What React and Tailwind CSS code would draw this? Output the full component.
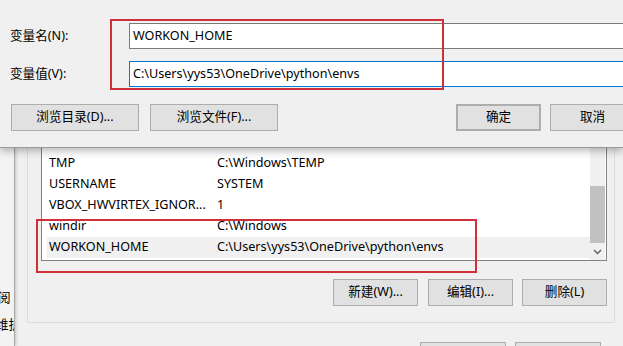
import React from "react";

const rows = [
  { name: "TEMP", value: "C:\\Windows\\TEMP" },
  { name: "TMP", value: "C:\\Windows\\TEMP" },
  { name: "USERNAME", value: "SYSTEM" },
  { name: "VBOX_HWVIRTEX_IGNOR...", value: "1" },
  { name: "windir", value: "C:\\Windows" },
  { name: "WORKON_HOME", value: "C:\\Users\\yys53\\OneDrive\\python\\envs", selected: true },
];

const Btn = ({ children, className = "" }) => (
  <div
    className={`h-[27px] shrink-0 flex items-center justify-center bg-[#e1e1e1] border border-[#adadad] ${className}`}
  >
    {children}
  </div>
);

const App = () => {
  return (
    <div
      className="relative w-[623px] h-[346px] overflow-hidden bg-[#f0f0f0] text-[12.6px] text-black"
      style={{ fontFamily: '"Noto Sans", "Noto Sans CJK SC", sans-serif' }}
    >
      {/* edit variable dialog on top */}
      <div className="relative z-10 h-[148px] bg-[#f0f0f0] border-b border-[#9a9a9a] shadow-[0_3px_8px_rgba(0,0,0,0.28)] pt-[23px] pl-[10px]">
        <div className="flex items-center h-[26px]">
          <div className="w-[119px] shrink-0">变量名(N):</div>
          <div className="w-[520px] shrink-0 h-[26px] bg-white border border-[#7a7a7a] flex items-center pl-[3px]">
            WORKON_HOME
          </div>
        </div>
        <div className="flex items-center h-[26px] mt-[12px]">
          <div className="w-[119px] shrink-0">变量值(V):</div>
          <div className="w-[520px] shrink-0 h-[26px] bg-white border border-[#0078d7] flex items-center pl-[3px]">
            C:\Users\yys53\OneDrive\python\envs
          </div>
        </div>
        <div className="flex mt-[17px] pl-[1px]">
          <Btn className="w-[128px]">浏览目录(D)...</Btn>
          <Btn className="w-[128px] ml-[11px]">浏览文件(F)...</Btn>
          <Btn className="w-[85px] ml-[178px] border-2 border-[#0078d7]">确定</Btn>
          <Btn className="w-[85px] ml-[9px]">取消</Btn>
        </div>

        <div className="absolute left-[110px] top-[19px] w-[334px] h-[71px] border-2 border-[#cf2f38]" />
      </div>

      {/* environment variables dialog underneath */}
      <div className="flex h-[198px]">
        <div className="w-[15px] shrink-0 border-r border-[#a8a8a8] bg-[#f3f3f3] shadow-[1px_0_3px_rgba(0,0,0,0.2)] overflow-hidden whitespace-nowrap">
          <div className="mt-[141px] -ml-[2px]">阅</div>
          <div className="mt-[8px] -ml-[4px]">维护</div>
        </div>
        <div className="relative flex-1 pl-[12px]">
          <div className="w-[588px] h-[191px] -mt-[16px] border-l border-b border-r border-[#dcdcdc] pl-[13px] pr-[7px]">
            <div className="flex h-[129px] bg-white border-l border-b border-r border-[#828282] pr-[1px]">
              <div className="flex-1 pl-[5px]">
                {rows.map((r, i) => (
                  <div
                    key={i}
                    className={`flex items-center h-[21px] pl-[2px] ${r.selected ? "bg-[#f0f0f0]" : ""}`}
                  >
                    <div className="w-[168px] shrink-0 whitespace-nowrap">{r.name}</div>
                    <div className="whitespace-nowrap">{r.value}</div>
                  </div>
                ))}
              </div>
              <div className="w-[15px] shrink-0 bg-[#f0f0f0] flex flex-col">
                <div className="h-[54px]" />
                <div className="h-[57px] bg-[#c1c1c1]" />
                <div className="flex-1 flex items-center justify-center">
                  <svg width="9" height="6" viewBox="0 0 9 6">
                    <path d="M1 1 L4.5 4.5 L8 1" stroke="#606060" strokeWidth="1.5" fill="none" />
                  </svg>
                </div>
              </div>
            </div>
            <div className="flex justify-end mt-[18px]">
              <Btn className="w-[85px]">新建(W)...</Btn>
              <Btn className="w-[85px] ml-[10px]">编辑(I)...</Btn>
              <Btn className="w-[85px] ml-[9px]">删除(L)</Btn>
            </div>
          </div>
          <div className="flex mt-[19px] pl-[393px]">
            <Btn className="w-[86px]" />
            <Btn className="w-[86px] ml-[9px]" />
          </div>

          <div className="absolute left-[21px] top-[71px] w-[441px] h-[54px] border-2 border-[#cf2f38]" />
        </div>
      </div>
    </div>
  );
};

export default App;
